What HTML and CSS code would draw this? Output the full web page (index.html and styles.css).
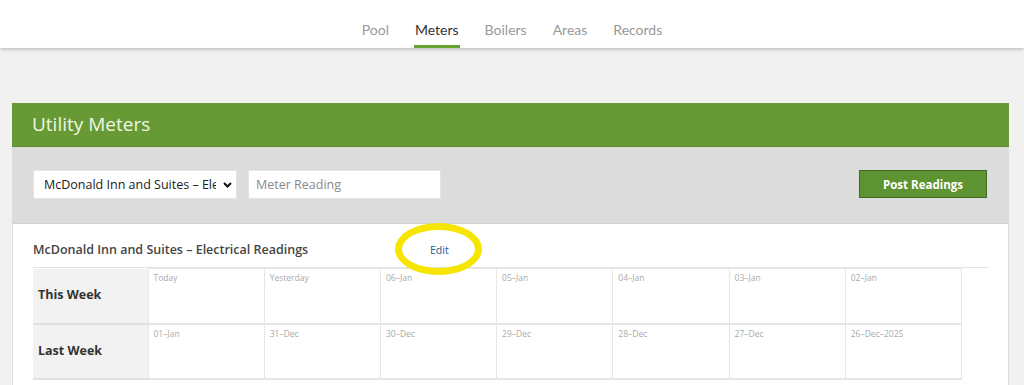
FILE: index.html
```html
<!DOCTYPE html>
<html lang="en">
  <head>
    <meta charset="UTF-8" />
    <title>Utility Meters</title>
    <link rel="stylesheet" href="styles.css">
  </head>
  <body>
    <nav class="topnav">
      <a href="#">Pool</a>
      <a href="#" class="active">Meters</a>
      <a href="#">Boilers</a>
      <a href="#">Areas</a>
      <a href="#">Records</a>
    </nav>

    <main class="page">
      <section class="card">
        <h1 class="card-title">Utility Meters</h1>

        <div class="toolbar">
          <div class="select-wrap">
            <select class="meter-select">
              <option>McDonald Inn and Suites – Electrical</option>
            </select>
            <svg class="chevron" width="9" height="6" viewBox="0 0 9 6">
              <path d="M1 1l3.5 3.5L8 1" fill="none" stroke="#111" stroke-width="2"/>
            </svg>
          </div>
          <input type="text" class="reading" placeholder="Meter Reading" />
          <button class="post-btn">Post Readings</button>
        </div>

        <div class="readings">
          <div class="readings-head">
            <h2 class="readings-title">McDonald Inn and Suites – Electrical Readings</h2>
            <a href="#" class="edit">Edit<span class="circle"></span></a>
          </div>

          <table class="week-table">
            <tr>
              <th>This Week</th>
              <td>Today</td>
              <td>Yesterday</td>
              <td>06–Jan</td>
              <td>05–Jan</td>
              <td>04–Jan</td>
              <td>03–Jan</td>
              <td>02–Jan</td>
            </tr>
            <tr>
              <th>Last Week</th>
              <td>01–Jan</td>
              <td>31–Dec</td>
              <td>30–Dec</td>
              <td>29–Dec</td>
              <td>28–Dec</td>
              <td>27–Dec</td>
              <td>26–Dec–2025</td>
            </tr>
          </table>
        </div>
      </section>
    </main>
  </body>
</html>
```

FILE: styles.css
```css
* {
  margin: 0;
  padding: 0;
  box-sizing: border-box;
}

body {
  background-color: #f1f1f1;
  font-family: "Open Sans", "Liberation Sans", sans-serif;
  color: #444;
  height: 385px;
  overflow: hidden;
}

.topnav {
  height: 48px;
  background-color: white;
  display: flex;
  justify-content: center;
  gap: 24px;
  box-shadow: 0 2px 3px rgba(0, 0, 0, 0.18);
  padding-left: 0;
}

.topnav > a {
  font-family: Lato, "Open Sans", sans-serif;
  font-size: 14px;
  color: #999;
  text-decoration: none;
  line-height: 20px;
  height: 48px;
  border-bottom: 3px solid transparent;
  padding: 20px 1px 0;
}

.topnav > a.active {
  color: #333;
  border-bottom-color: #6aa232;
}

.page {
  padding: 55px 15px 0 12px;
}

.card {
  background-color: white;
  border-left: 1px solid #ddd;
  border-right: 1px solid #ddd;
  height: 300px;
}

.card-title {
  background-color: #679a34;
  color: #eef7e2;
  font-weight: 400;
  font-size: 19px;
  height: 44px;
  line-height: 43px;
  padding-left: 20px;
  margin: 0 -1px;
  border-bottom: 1px solid #5d8c2e;
}

.toolbar {
  background-color: #dcdcdc;
  height: 77px;
  display: flex;
  align-items: center;
  padding: 0 21px 2px 20px;
  border-bottom: 1px solid #d0d0d0;
}

.select-wrap {
  position: relative;
  width: 204px;
  height: 29px;
}

.meter-select {
  appearance: none;
  width: 100%;
  height: 100%;
  border: 1px solid #e4e4e4;
  background-color: white;
  font-family: inherit;
  font-size: 12.5px;
  color: #222;
  padding: 0 20px 0 10px;
  outline: none;
}

.chevron {
  position: absolute;
  right: 5px;
  top: 12px;
}

.reading {
  width: 193px;
  height: 29px;
  margin-left: 11px;
  border: 1px solid #e4e4e4;
  font-family: inherit;
  font-size: 12.5px;
  padding: 0 7px;
  outline: none;

  &::placeholder {
    color: #8a8a8a;
  }
}

.post-btn {
  margin-left: auto;
  width: 128px;
  height: 28px;
  background-color: #5e9331;
  border: 1px solid #3f6d1f;
  color: white;
  font-family: inherit;
  font-weight: 700;
  font-size: 11.5px;
}

.readings {
  padding: 0 19px 0 20px;
}

.readings-head {
  display: flex;
  align-items: center;
  height: 44px;
  border-bottom: 1px solid #e2e2e2;
  padding-top: 8px;
}

.readings-title {
  width: 397px;
  font-size: 12.5px;
  font-weight: 600;
  color: #454545;
}

.edit {
  position: relative;
  font-size: 10.5px;
  color: #22589a;
  text-decoration: none;
}

.circle {
  position: absolute;
  left: -35px;
  top: -20px;
  width: 87px;
  height: 52px;
  border: 7px solid #f6e500;
  border-radius: 50%;
}

.week-table {
  width: 929px;
  border-collapse: collapse;
  table-layout: fixed;
}

.week-table th {
  width: 115px;
  height: 55px;
  background-color: #f2f2f2;
  text-align: left;
  font-size: 12.5px;
  font-weight: 700;
  color: #333;
  padding: 0 0 2px 5px;
  border-bottom: 2px solid #e0e0e0;
}

.week-table td {
  height: 55px;
  vertical-align: top;
  font-size: 8.5px;
  color: #aaa;
  padding: 3px 5px;
  border: 1px solid #e6e6e6;
  border-bottom: 2px solid #e6e6e6;
}
```
